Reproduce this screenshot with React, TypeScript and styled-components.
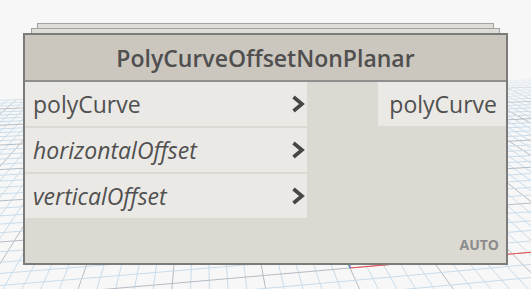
import React from "react";
import styled, { createGlobalStyle } from "styled-components";

const GlobalStyle = createGlobalStyle`
    html, body {
        margin: 0;
        padding: 0;
        background: #f7f7f7;
        font-family: "Open Sans", "DejaVu Sans", sans-serif;
    }
`;

// ground plane grid, projected with a homography (origin + two vanishing points)
const O = [350, 268];
const VX = [4120, -60];
const VY = [202, -60];
const A = 0.0045;
const B = 0.036;

const project = (x: number, y: number) => {
    const w = 1 + A * x + B * y;
    return [
        (O[0] + A * x * VX[0] + B * y * VY[0]) / w,
        (O[1] + A * x * VX[1] + B * y * VY[1]) / w,
    ];
};

const X_MIN = -80;
const X_MAX = 80;
const Y_MIN = -6;
const Y_MAX = 33;

function GroundGrid() {
    const lines: React.ReactNode[] = [];

    for (let x = X_MIN; x <= X_MAX; x++) {
        const [x1, y1] = project(x, Y_MIN);
        const [x2, y2] = project(x, Y_MAX);
        const major = x % 5 === 0;
        lines.push(
            <line key={"x" + x} x1={x1} y1={y1} x2={x2} y2={y2}
                  stroke={major ? "#b4bcc4" : "#c9dcea"} strokeWidth={1} />
        );
    }
    for (let y = Y_MIN; y <= Y_MAX; y++) {
        const [x1, y1] = project(X_MIN, y);
        const [x2, y2] = project(X_MAX, y);
        const major = y % 5 === 0;
        lines.push(
            <line key={"y" + y} x1={x1} y1={y1} x2={x2} y2={y2}
                  stroke={major ? "#b4bcc4" : "#c9dcea"} strokeWidth={1} />
        );
    }

    const [ox, oy] = project(0, 0);
    const [rx, ry] = project(40, 0);
    const [gx, gy] = project(0, 1);

    return (
        <Canvas width="531" height="289" viewBox="0 0 531 289">
            <defs>
                <linearGradient id="fade" x1="0" y1="65" x2="0" y2="115" gradientUnits="userSpaceOnUse">
                    <stop offset="0" stopColor="#fff" stopOpacity="0" />
                    <stop offset="1" stopColor="#fff" stopOpacity="1" />
                </linearGradient>
                <mask id="fadeMask">
                    <rect x="0" y="0" width="531" height="289" fill="url(#fade)" />
                </mask>
            </defs>
            <g mask="url(#fadeMask)">{lines}</g>
            <line x1={ox} y1={oy} x2={rx} y2={ry} stroke="#f05050" strokeWidth={1.2} />
            <line x1={ox} y1={oy} x2={gx} y2={gy} stroke="#4caf50" strokeWidth={1.2} />
            <line x1={ox} y1={oy} x2={ox} y2={oy - 12} stroke="#6a6aff" strokeWidth={1.2} />
        </Canvas>
    );
}

function Chevron() {
    return (
        <svg width="14" height="18" viewBox="0 0 14 18">
            <polyline points="2.5,2 11,9 2.5,16" fill="none" stroke="#464646" strokeWidth="3.6" />
        </svg>
    );
}

const inputs = [
    { name: "polyCurve", italic: false },
    { name: "horizontalOffset", italic: true },
    { name: "verticalOffset", italic: true },
];

export default function App() {
    return (
        <>
            <GlobalStyle />
            <Page>
                <GroundGrid />
                <Node>
                    <StackLayer inset={14} />
                    <StackLayer inset={8} />
                    <Box>
                        <Header>PolyCurveOffsetNonPlanar</Header>
                        <Body>
                            <Ports>
                                <Inputs>
                                    {inputs.map((p) => (
                                        <InputRow key={p.name}>
                                            <PortName italic={p.italic}>{p.name}</PortName>
                                            <Chevron />
                                        </InputRow>
                                    ))}
                                </Inputs>
                                <Outputs>
                                    <OutputRow>
                                        <PortName>polyCurve</PortName>
                                    </OutputRow>
                                </Outputs>
                            </Ports>
                            <Footer>
                                <Lacing>AUTO</Lacing>
                            </Footer>
                        </Body>
                    </Box>
                </Node>
            </Page>
        </>
    );
}

const Page = styled.div`
    position: relative;
    width: 531px;
    height: 289px;
    overflow: hidden;
    padding: 23px 0 0 23px;
    box-sizing: border-box;
`;

const Canvas = styled.svg`
    position: absolute;
    left: 0;
    top: 0;
`;

const Node = styled.div`
    position: relative;
    width: 485px;
    display: flex;
    flex-direction: column;
`;

const StackLayer = styled.div<{ inset: number }>`
    margin: 0 ${(p) => p.inset}px;
    height: 4px;
    border: 1px solid #a3a3a3;
    border-bottom: none;
    background: #dfddd8;
`;

const Box = styled.div`
    border: 2px solid #7b7b7b;
    background: #dcd9d2;
    display: flex;
    flex-direction: column;
`;

const Header = styled.div`
    height: 45px;
    line-height: 47px;
    background: #cbc6be;
    border-bottom: 2px solid #8f8f8f;
    text-align: center;
    font-size: 23px;
    font-weight: 600;
    color: #4f4f4f;
`;

const Body = styled.div`
    height: 181px;
    display: flex;
    flex-direction: column;
`;

const Ports = styled.div`
    display: flex;
    justify-content: space-between;
    align-items: flex-start;
`;

const Inputs = styled.div`
    width: 282px;
    display: flex;
    flex-direction: column;
    gap: 2px;
`;

const InputRow = styled.div`
    height: 44px;
    display: flex;
    align-items: center;
    justify-content: space-between;
    padding: 0 2px 0 8px;
    background: #ebe9e5;
`;

const Outputs = styled.div`
    width: 128px;
    display: flex;
    flex-direction: column;
`;

const OutputRow = styled.div`
    height: 44px;
    display: flex;
    align-items: center;
    justify-content: flex-end;
    padding-right: 9px;
    background: #ebe9e5;
`;

const PortName = styled.span<{ italic?: boolean }>`
    font-size: 23px;
    line-height: 44px;
    color: #505050;
    font-style: ${(p) => (p.italic ? "italic" : "normal")};
`;

const Footer = styled.div`
    margin-top: auto;
    display: flex;
    justify-content: flex-end;
    padding: 0 7px 9px 0;
`;

const Lacing = styled.span`
    font-size: 14px;
    font-weight: 700;
    color: #8b8b8b;
    line-height: 18px;
`;
